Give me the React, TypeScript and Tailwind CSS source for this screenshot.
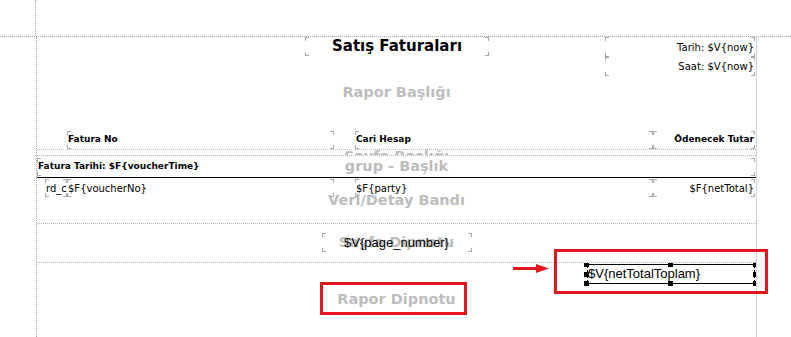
import React from 'react';

const tahoma = "font-['DejaVu_Sans',sans-serif]";
const arial = "font-['Liberation_Sans',Arial,sans-serif]";

// report element with the little corner marks of the designer
const Frame: React.FC<{ box: string; className?: string; children?: React.ReactNode }> = ({ box, className, children }) => (
  <div className={`relative shrink-0 ${box}`}>
    <span className="absolute top-0 left-0 w-[4px] h-[4px] border-t border-l border-[#a8a8a8]" />
    <span className="absolute top-0 right-0 w-[4px] h-[4px] border-t border-r border-[#a8a8a8]" />
    <span className="absolute bottom-0 left-0 w-[4px] h-[4px] border-b border-l border-[#a8a8a8]" />
    <span className="absolute bottom-0 right-0 w-[4px] h-[4px] border-b border-r border-[#a8a8a8]" />
    <div className={`relative h-full flex items-center whitespace-nowrap overflow-hidden px-[1px] text-black ${className ?? ''}`}>
      {children}
    </div>
  </div>
);

type BandProps = {
  label: string;
  className: string;
  labelClass?: string;
  children?: React.ReactNode;
};

const Band: React.FC<BandProps> = ({ label, className, labelClass, children }) => (
  <div className={`relative shrink-0 overflow-hidden ${className}`}>
    <div className={`absolute inset-x-0 flex justify-center text-[14.5px] font-bold text-[#bdbdbd] whitespace-nowrap ${tahoma} ${labelClass ?? 'inset-y-0 items-center'}`}>
      {label}
    </div>
    <div className="relative h-full flex flex-col">{children}</div>
  </div>
);

const Handle: React.FC<{ cls: string }> = ({ cls }) => (
  <span className={`absolute w-[5px] h-[5px] bg-black ${cls}`} />
);

const head = `text-[9px] font-bold ${tahoma}`;
const cell = `text-[10px] ${tahoma}`;

export default function App() {
  return (
    <div className="relative w-[791px] h-[337px] overflow-hidden bg-white flex flex-col">
      {/* top margin guide */}
      <div className="h-[37px] shrink-0 flex border-b border-dotted border-[#98a5b3]">
        <div className="w-[36px] border-r border-dotted border-[#98a5b3]" />
      </div>

      <div className="flex-1 flex">
        <div className="w-[36px] shrink-0" />
        <div className="w-0 border-l border-dotted border-[#98a5b3]" />

        <div className="w-[720px] shrink-0 flex flex-col border-r border-[#c9d5e0]">
          <Band label="Rapor Başlığı" className="h-[113px] border-b border-dotted border-[#b5b5b5]">
            <div className="flex">
              <div className="w-[268px] shrink-0" />
              <Frame box="w-[184px] h-[19px]" className={`justify-center text-[15px] font-bold ${tahoma}`}>
                Satış Faturaları
              </Frame>
              <div className="flex-1" />
              <div className="w-[150px] mr-[1px] flex flex-col">
                <Frame box="w-full h-[20px]" className={`justify-end ${cell}`}>
                  Tarih: $V{'{now}'}
                </Frame>
                <Frame box="w-full h-[19px]" className={`justify-end ${cell}`}>
                  Saat: $V{'{now}'}
                </Frame>
              </div>
            </div>
            <div className="flex-1" />
            <div className="flex pl-[30px] pr-[1px] gap-[21px]">
              <Frame box="w-[267px] h-[18px]" className={head}>Fatura No</Frame>
              <Frame box="w-[298px] h-[18px]" className={head}>Cari Hesap</Frame>
              <Frame box="flex-1 h-[18px] -ml-[21px]" className={`justify-end ${head}`}>Ödenecek Tutar</Frame>
            </div>
          </Band>

          <Band label="Sayfa Başlığı" className="h-[6px] border-b border-dotted border-[#b5b5b5]" labelClass="-top-[4px] h-[20px] items-start" />

          <Band label="grup - Başlık" className="h-[22px] border-b border-black">
            <div className="pt-[2px] pr-[1px]">
              <Frame box="w-full h-[18px]" className={head}>
                Fatura Tarihi: $F{'{voucherTime}'}
              </Frame>
            </div>
          </Band>

          <Band label="Veri/Detay Bandı" className="h-[46px] border-b border-dotted border-[#b5b5b5]">
            <div className="flex pt-[1px] pl-[8px] pr-[1px]">
              <Frame box="w-[22px] h-[18px]" className={cell}>rd_c</Frame>
              <Frame box="w-[267px] h-[18px]" className={cell}>$F{'{voucherNo}'}</Frame>
              <Frame box="w-[298px] h-[18px] ml-[21px]" className={cell}>$F{'{party}'}</Frame>
              <Frame box="flex-1 h-[18px]" className={`justify-end ${cell}`}>$F{'{netTotal}'}</Frame>
            </div>
          </Band>

          <Band label="Sayfa Dipnotu" className="h-[39px] border-b border-dotted border-[#b5b5b5]">
            <div className="flex justify-center pt-[9px]">
              <Frame box="w-[150px] h-[19px]" className={`justify-center text-[13px] ${arial}`}>
                $V{'{page_number}'}
              </Frame>
            </div>
          </Band>

          <Band label="Rapor Dipnotu" className="flex-1" labelClass="top-[26px] items-start">
            <div className="flex justify-end pt-[1px] pr-[1px]">
              {/* selected element */}
              <div className="relative w-[168px] h-[20px] border-y border-black">
                <div className="absolute inset-y-0 left-0 border-l border-dashed border-black" />
                <div className="absolute inset-y-0 right-0 border-r border-dashed border-black" />
                <div className={`h-full flex items-center pl-[1px] text-[13px] text-black whitespace-nowrap ${arial}`}>
                  $V{'{netTotalToplam}'}
                </div>
                <Handle cls="-left-[3px] -top-[3px]" />
                <Handle cls="left-[81px] -top-[3px]" />
                <Handle cls="-right-[3px] -top-[3px]" />
                <Handle cls="-left-[3px] top-[7px]" />
                <Handle cls="-right-[3px] top-[7px]" />
                <Handle cls="-left-[3px] -bottom-[3px]" />
                <Handle cls="left-[81px] -bottom-[3px]" />
                <Handle cls="-right-[3px] -bottom-[3px]" />
              </div>
            </div>
          </Band>
        </div>
      </div>

      {/* annotations */}
      <div className="absolute left-[320px] top-[282px] w-[147px] h-[33px] border-[3px] border-[#e3161d]" />
      <div className="absolute left-[554px] top-[249px] w-[214px] h-[45px] border-[3px] border-[#e3161d]" />
      <svg className="absolute left-[512px] top-[262px]" width="38" height="12" viewBox="0 0 38 12">
        <rect x="1" y="5" width="26" height="3" fill="#e3161d" />
        <polygon points="24,2 37,6.5 24,11" fill="#e3161d" />
      </svg>
    </div>
  );
}
